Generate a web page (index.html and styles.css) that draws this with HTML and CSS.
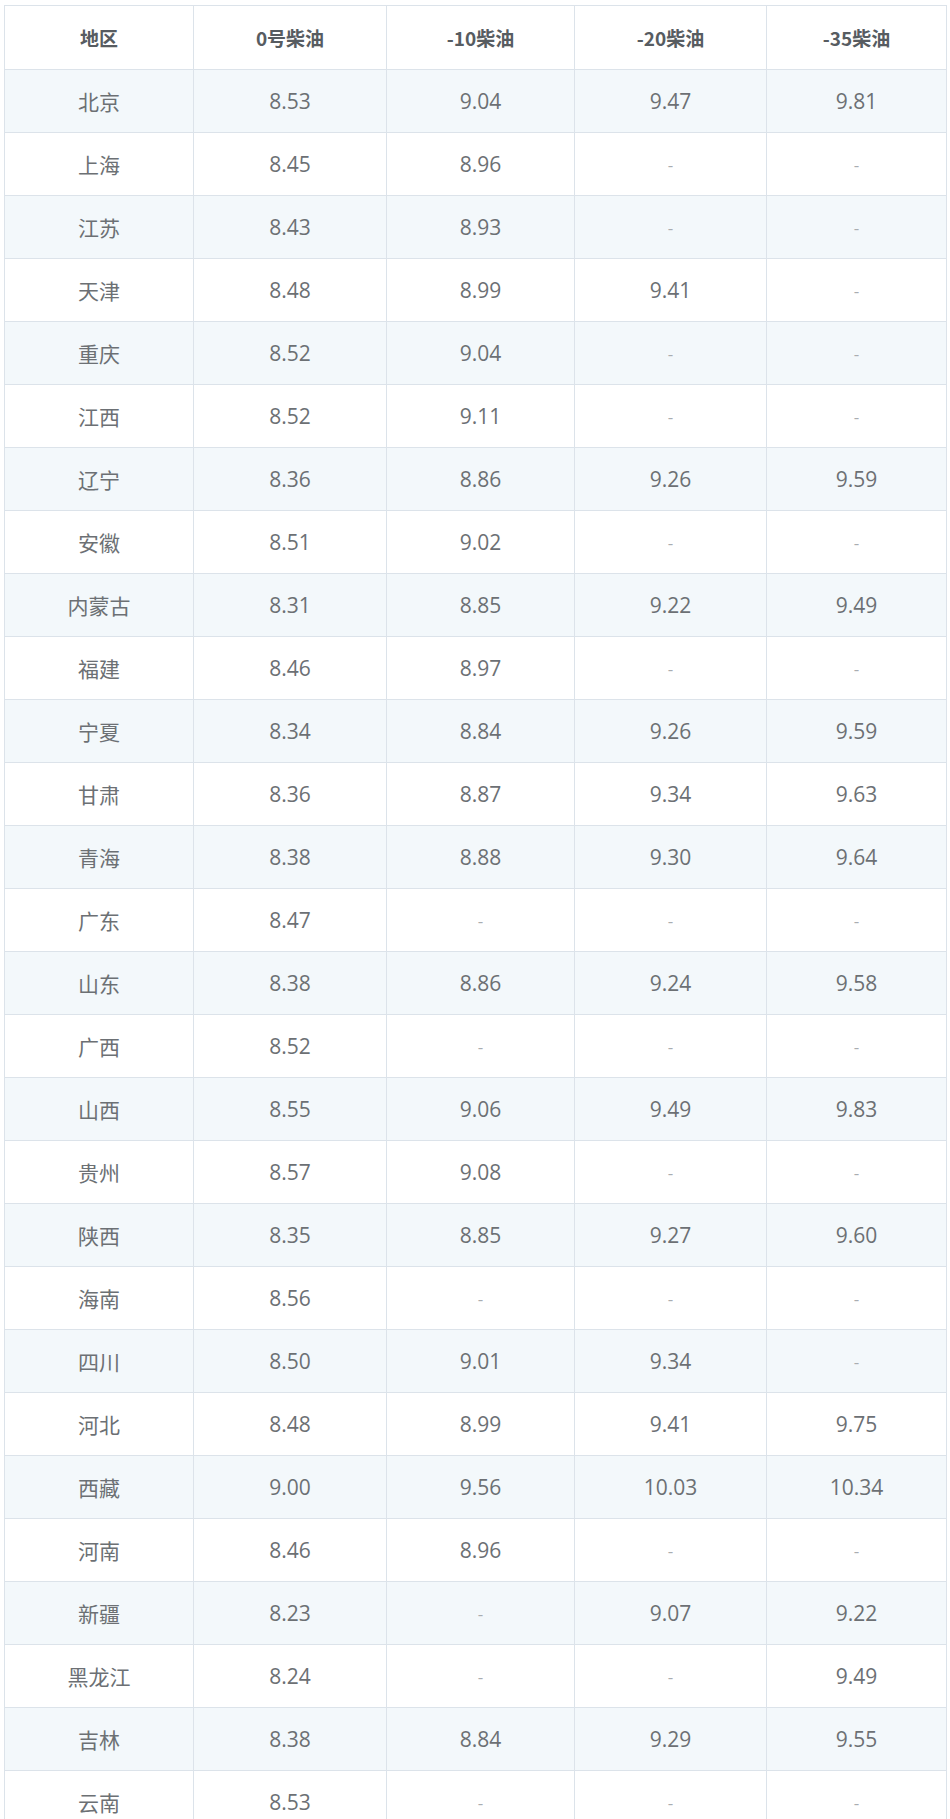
FILE: index.html
```html
<!DOCTYPE html>
<html lang="zh-CN">
<head>
<meta charset="utf-8">
<title>柴油价格</title>
<link rel="stylesheet" href="styles.css">
</head>
<body>
<table class="price-table">
  <colgroup>
    <col class="c1"><col class="c2"><col class="c3"><col class="c4"><col class="c5">
  </colgroup>
  <thead>
    <tr><th>地区</th><th>0号柴油</th><th>-10柴油</th><th>-20柴油</th><th>-35柴油</th></tr>
  </thead>
  <tbody>
    <tr><td>北京</td><td>8.53</td><td>9.04</td><td>9.47</td><td>9.81</td></tr>
    <tr><td>上海</td><td>8.45</td><td>8.96</td><td class="na">-</td><td class="na">-</td></tr>
    <tr><td>江苏</td><td>8.43</td><td>8.93</td><td class="na">-</td><td class="na">-</td></tr>
    <tr><td>天津</td><td>8.48</td><td>8.99</td><td>9.41</td><td class="na">-</td></tr>
    <tr><td>重庆</td><td>8.52</td><td>9.04</td><td class="na">-</td><td class="na">-</td></tr>
    <tr><td>江西</td><td>8.52</td><td>9.11</td><td class="na">-</td><td class="na">-</td></tr>
    <tr><td>辽宁</td><td>8.36</td><td>8.86</td><td>9.26</td><td>9.59</td></tr>
    <tr><td>安徽</td><td>8.51</td><td>9.02</td><td class="na">-</td><td class="na">-</td></tr>
    <tr><td>内蒙古</td><td>8.31</td><td>8.85</td><td>9.22</td><td>9.49</td></tr>
    <tr><td>福建</td><td>8.46</td><td>8.97</td><td class="na">-</td><td class="na">-</td></tr>
    <tr><td>宁夏</td><td>8.34</td><td>8.84</td><td>9.26</td><td>9.59</td></tr>
    <tr><td>甘肃</td><td>8.36</td><td>8.87</td><td>9.34</td><td>9.63</td></tr>
    <tr><td>青海</td><td>8.38</td><td>8.88</td><td>9.30</td><td>9.64</td></tr>
    <tr><td>广东</td><td>8.47</td><td class="na">-</td><td class="na">-</td><td class="na">-</td></tr>
    <tr><td>山东</td><td>8.38</td><td>8.86</td><td>9.24</td><td>9.58</td></tr>
    <tr><td>广西</td><td>8.52</td><td class="na">-</td><td class="na">-</td><td class="na">-</td></tr>
    <tr><td>山西</td><td>8.55</td><td>9.06</td><td>9.49</td><td>9.83</td></tr>
    <tr><td>贵州</td><td>8.57</td><td>9.08</td><td class="na">-</td><td class="na">-</td></tr>
    <tr><td>陕西</td><td>8.35</td><td>8.85</td><td>9.27</td><td>9.60</td></tr>
    <tr><td>海南</td><td>8.56</td><td class="na">-</td><td class="na">-</td><td class="na">-</td></tr>
    <tr><td>四川</td><td>8.50</td><td>9.01</td><td>9.34</td><td class="na">-</td></tr>
    <tr><td>河北</td><td>8.48</td><td>8.99</td><td>9.41</td><td>9.75</td></tr>
    <tr><td>西藏</td><td>9.00</td><td>9.56</td><td>10.03</td><td>10.34</td></tr>
    <tr><td>河南</td><td>8.46</td><td>8.96</td><td class="na">-</td><td class="na">-</td></tr>
    <tr><td>新疆</td><td>8.23</td><td class="na">-</td><td>9.07</td><td>9.22</td></tr>
    <tr><td>黑龙江</td><td>8.24</td><td class="na">-</td><td class="na">-</td><td>9.49</td></tr>
    <tr><td>吉林</td><td>8.38</td><td>8.84</td><td>9.29</td><td>9.55</td></tr>
    <tr><td>云南</td><td>8.53</td><td class="na">-</td><td class="na">-</td><td class="na">-</td></tr>
  </tbody>
</table>
</body>
</html>
```

FILE: styles.css
```css
html, body {
  margin: 0;
  padding: 0;
  background: #ffffff;
}

body {
  padding: 5px 0 0 4px;
  font-family: "Open Sans", "Noto Sans CJK SC", sans-serif;
  color: #666a6e;
  overflow: hidden;
}

.price-table {
  width: 942px;
  table-layout: fixed;
  border-collapse: collapse;
  border: 1px solid #dce3ea;
}

.c1 { width: 189px; }
.c2 { width: 193px; }
.c3 { width: 188px; }
.c4 { width: 192px; }
.c5 { width: 180px; }

.price-table th,
.price-table td {
  border: 1px solid #dce3ea;
  padding: 0;
  text-align: center;
  vertical-align: middle;
}

.price-table th {
  height: 63px;
  font-size: 19px;
  font-weight: 700;
  color: #575c61;
  font-family: "Noto Sans CJK SC", sans-serif;
}

.price-table td {
  height: 62px;
  font-size: 21px;
  color: #6c7074;
}

.price-table tbody tr:nth-child(odd) td {
  background: #f3f8fb;
}

.price-table td.na {
  color: #a9adb1;
  font-size: 17px;
}
```
